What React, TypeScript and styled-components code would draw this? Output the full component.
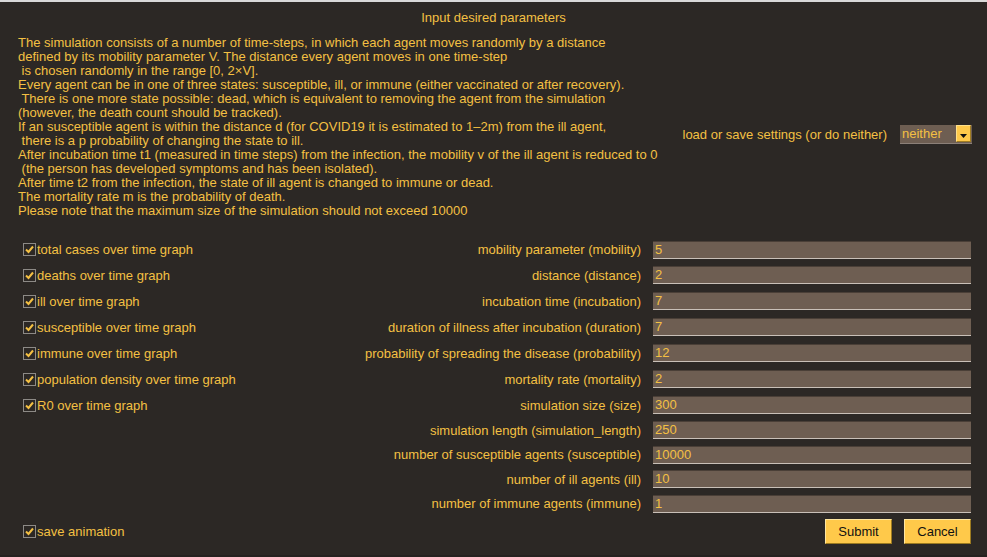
import * as React from "react";
import styled, { createGlobalStyle } from "styled-components";

const GlobalStyle = createGlobalStyle`
  html, body {
    margin: 0;
    padding: 0;
    background: #2c2825;
  }
  * {
    box-sizing: border-box;
  }
`;

const description = [
  "The simulation consists of a number of time-steps, in which each agent moves randomly by a distance",
  "defined by its mobility parameter V. The distance every agent moves in one time-step",
  " is chosen randomly in the range [0, 2\u00d7V].",
  "Every agent can be in one of three states: susceptible, ill, or immune (either vaccinated or after recovery).",
  " There is one more state possible: dead, which is equivalent to removing the agent from the simulation",
  "(however, the death count should be tracked).",
  "If an susceptible agent is within the distance d (for COVID19 it is estimated to 1\u20132m) from the ill agent,",
  " there is a p probability of changing the state to ill.",
  "After incubation time t1 (measured in time steps) from the infection, the mobility v of the ill agent is reduced to 0",
  " (the person has developed symptoms and has been isolated).",
  "After time t2 from the infection, the state of ill agent is changed to immune or dead.",
  "The mortality rate m is the probability of death.",
  "Please note that the maximum size of the simulation should not exceed 10000",
];

const graphs = [
  "total cases over time graph",
  "deaths over time graph",
  "ill over time graph",
  "susceptible over time graph",
  "immune over time graph",
  "population density over time graph",
  "R0 over time graph",
];

const fields = [
  { label: "mobility parameter (mobility)", value: "5" },
  { label: "distance (distance)", value: "2" },
  { label: "incubation time (incubation)", value: "7" },
  { label: "duration of illness after incubation (duration)", value: "7" },
  { label: "probability of spreading the disease (probability)", value: "12" },
  { label: "mortality rate (mortality)", value: "2" },
  { label: "simulation size (size)", value: "300" },
  { label: "simulation length (simulation_length)", value: "250" },
  { label: "number of susceptible agents (susceptible)", value: "10000" },
  { label: "number of ill agents (ill)", value: "10" },
  { label: "number of immune agents (immune)", value: "1" },
];

const Window = styled.div`
  width: 987px;
  height: 557px;
  background: #2c2825;
  border-top: 2px solid #d9d9d9;
  border-bottom: 2px solid #262220;
  color: #f4c043;
  font-family: "Liberation Sans", Arial, sans-serif;
  font-size: 13px;
  display: flex;
  flex-direction: column;
  overflow: hidden;
`;

const Title = styled.div`
  text-align: center;
  line-height: 14px;
  padding-top: 9px;
`;

const Intro = styled.div`
  display: flex;
  align-items: center;
  padding: 11px 15px 0 18px;
`;

const Description = styled.div`
  flex: 1;
  white-space: pre;
  line-height: 14px;
`;

const Settings = styled.div`
  display: flex;
  align-items: center;
  gap: 13px;
  margin-top: 14px;
`;

const Select = styled.div`
  width: 72px;
  height: 19px;
  background: #6e5e52;
  display: flex;
  align-items: center;
  justify-content: space-between;
  padding-left: 2px;
  border-bottom: 1px solid #8c8078;
`;

const SelectButton = styled.div`
  width: 15px;
  height: 17px;
  background: #ffc94a;
  border: 1px solid #ffe08a;
  border-right-color: #a27e22;
  border-bottom-color: #a27e22;
  display: flex;
  align-items: flex-end;
  justify-content: center;
  padding-bottom: 3px;
  margin-right: 1px;
`;

const Options = styled.div`
  display: grid;
  grid-template-columns: 1fr auto 318px;
  grid-template-rows: 25px repeat(6, 26px) repeat(4, 24.5px);
  column-gap: 12px;
  padding: 19px 16px 0 23px;
`;

const CheckRow = styled.label<{ row: number }>`
  grid-column: 1;
  grid-row: ${({ row }) => row};
  display: flex;
  align-items: center;
  gap: 1px;
`;

const Box = styled.span`
  width: 13px;
  height: 13px;
  border: 1px solid #8d8a86;
  background: #2c2825;
  display: flex;
  align-items: center;
  justify-content: center;
`;

const FieldLabel = styled.div<{ row: number }>`
  grid-column: 2;
  grid-row: ${({ row }) => row};
  align-self: center;
  text-align: right;
`;

const Input = styled.div<{ row: number }>`
  grid-column: 3;
  grid-row: ${({ row }) => row};
  align-self: center;
  height: 18px;
  background: #6e5e52;
  border-top: 1px solid #4a3f37;
  border-bottom: 1px solid #c9c0b8;
  padding: 0 2px;
  line-height: 16px;
`;

const Footer = styled.div`
  display: flex;
  align-items: center;
  justify-content: space-between;
  padding: 3px 16px 0 23px;
`;

const Buttons = styled.div`
  display: flex;
  gap: 12px;
`;

const Button = styled.button`
  width: 67px;
  height: 25px;
  background: #ffc94a;
  border: 1px solid #ffe6a0;
  border-right-color: #9c7a20;
  border-bottom-color: #9c7a20;
  color: #111;
  font-family: "Liberation Sans", Arial, sans-serif;
  font-size: 13px;
  padding: 0;
`;

const Check: React.FC = () => (
  <Box>
    <svg width="9" height="9" viewBox="0 0 9 9">
      <path d="M1 4.5 L3.5 7 L8 1.5" fill="none" stroke="#f4c043" strokeWidth="2" />
    </svg>
  </Box>
);

const App: React.FC = () => {
  return (
    <>
      <GlobalStyle />
      <Window>
        <Title>Input desired parameters</Title>
        <Intro>
          <Description>{description.join("\n")}</Description>
          <Settings>
            <span>load or save settings (or do neither)</span>
            <Select>
              <span>neither</span>
              <SelectButton>
                <svg width="7" height="4" viewBox="0 0 7 4">
                  <path d="M0 0 H7 L3.5 4 Z" fill="#111" />
                </svg>
              </SelectButton>
            </Select>
          </Settings>
        </Intro>
        <Options>
          {graphs.map((g, i) => (
            <CheckRow key={g} row={i + 1}>
              <Check />
              {g}
            </CheckRow>
          ))}
          {fields.map((f, i) => (
            <React.Fragment key={f.label}>
              <FieldLabel row={i + 1}>{f.label}</FieldLabel>
              <Input row={i + 1}>{f.value}</Input>
            </React.Fragment>
          ))}
        </Options>
        <Footer>
          <CheckRow row={1}>
            <Check />
            save animation
          </CheckRow>
          <Buttons>
            <Button>Submit</Button>
            <Button>Cancel</Button>
          </Buttons>
        </Footer>
      </Window>
    </>
  );
};

export default App;
